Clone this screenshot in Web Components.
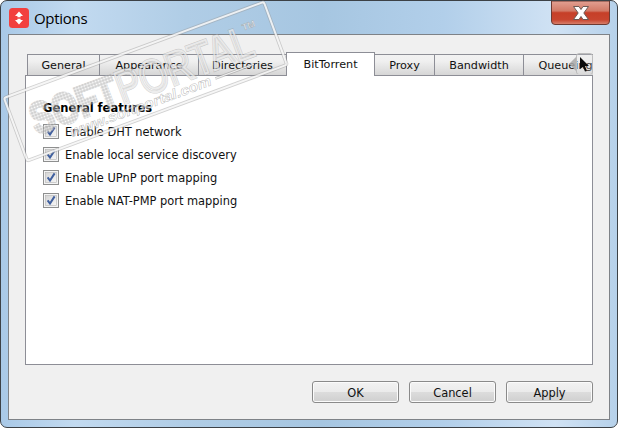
<!DOCTYPE html>
<html>
<head>
<meta charset="utf-8">
<title>Options</title>
<style>
  html, body { margin: 0; background: #fff; }
  body { font-family: "DejaVu Sans", sans-serif; font-size: 11.4px; color: #000; }
</style>
</head>
<body>
<app-window heading="Options">
  <tab-bar>
    <tab-item w="72">General</tab-item>
    <tab-item w="99">Appearance</tab-item>
    <tab-item w="88">Directories</tab-item>
    <tab-item w="88" selected>BitTorrent</tab-item>
    <tab-item w="60">Proxy</tab-item>
    <tab-item w="89">Bandwidth</tab-item>
    <tab-item w="84">Queueing</tab-item>
  </tab-bar>
  <tab-pane heading="General features">
    <check-row>Enable DHT network</check-row>
    <check-row>Enable local service discovery</check-row>
    <check-row>Enable UPnP port mapping</check-row>
    <check-row>Enable NAT-PMP port mapping</check-row>
  </tab-pane>
  <button-row>
    <dlg-button>OK</dlg-button>
    <dlg-button>Cancel</dlg-button>
    <dlg-button>Apply</dlg-button>
  </button-row>
</app-window>
<stamp-mark></stamp-mark>

<script>
class AppWindow extends HTMLElement {
  constructor() {
    super();
    const root = this.attachShadow({ mode: "open" });
    root.innerHTML = `
      <style>
        :host {
          display: flex;
          flex-direction: column;
          box-sizing: border-box;
          width: 618px;
          height: 428px;
          border: 1px solid #3c4146;
          border-radius: 7px;
          background: linear-gradient(90deg, #a9c9e7 0%, #c2daf0 12%, #b0cde6 30%, #a6c6e1 52%, #b2cfea 72%, #d0e2f4 90%, #b6d1ea 100%);
          overflow: hidden;
        }
        .title {
          display: flex;
          align-items: flex-start;
          height: 33px;
          padding: 0 7px 0 8px;
          flex: none;
        }
        .icon { margin-top: 7px; width: 20px; height: 20px; flex: none; }
        .text {
          margin: 5px 0 0 5px;
          font: 15px/24px "Open Sans", "Noto Sans", sans-serif;
          letter-spacing: -0.3px;
        }
        .close { margin-left: auto; width: 59px; height: 24px; flex: none; display: block; }
        .client {
          flex: 1;
          display: flex;
          flex-direction: column;
          margin: 0 7px 7px 7px;
          padding: 17px 17px 16px 16px;
          background: #f0f0f0;
          border: 1px solid #7e8287;
          min-height: 0;
        }
      </style>
      <div class="title">
        <svg class="icon" viewBox="0 0 20 20">
          <rect width="20" height="20" rx="3.5" fill="#f2403f"/>
          <path d="M10 3.5 14 8H11.6V9.2H8.4V8H6Z M8.4 10.8H11.6V12H14L10 16.5 6 12H8.4Z" fill="#fff"/>
        </svg>
        <div class="text"></div>
        <svg class="close" viewBox="0 0 59 24">
          <defs>
            <linearGradient id="red" x1="0" y1="0" x2="0" y2="1">
              <stop offset="0" stop-color="#e2a193"/>
              <stop offset=".42" stop-color="#d27a67"/>
              <stop offset=".5" stop-color="#c63f28"/>
              <stop offset=".8" stop-color="#c8452f"/>
              <stop offset="1" stop-color="#d98571"/>
            </linearGradient>
          </defs>
          <path d="M.5 0V20Q.5 23.5 4 23.5H55Q58.5 23.5 58.5 20V0Z" fill="url(#red)" stroke="#6d3a32"/>
          <path d="M22.5 5.5H28L30 8.5 32 5.5H37.5L32.8 12 37.5 18.5H32L30 15.5 28 18.5H22.5L27.2 12Z" fill="#fff" stroke="#6b5a55" stroke-width="1"/>
        </svg>
      </div>
      <div class="client"><slot></slot></div>
    `;
    root.querySelector(".text").textContent = this.getAttribute("heading");
  }
}

class TabBar extends HTMLElement {
  constructor() {
    super();
    const root = this.attachShadow({ mode: "open" });
    root.innerHTML = `
      <style>
        :host {
          display: block;
          position: relative;
          flex: none;
          height: 23px;
          margin-left: 2px;
          width: 566px;
          z-index: 1;
        }
        .tabs { display: flex; height: 24px; overflow: hidden; }
        .scroller {
          position: absolute;
          left: 534px;
          top: 1px;
          width: 32px;
          height: 21px;
        }
      </style>
      <div class="tabs"><slot></slot></div>
      <svg class="scroller" viewBox="0 0 32 21">
        <path d="M8 11 15 4V18Z" fill="#a9a9a9" opacity=".85"/>
        <rect x="15.5" y=".5" width="16" height="21" rx="2.5" fill="#e6e6e6" fill-opacity=".2" stroke="#bcbcbc"/>
        <path d="M19 4 28 13H24L26 18 24 18.6 22 14 19 16Z" fill="#0c0c0c"/>
      </svg>
    `;
  }
}

class TabItem extends HTMLElement {
  constructor() {
    super();
    const root = this.attachShadow({ mode: "open" });
    root.innerHTML = `
      <style>
        :host {
          display: flex;
          align-items: center;
          justify-content: center;
          box-sizing: border-box;
          flex: none;
          height: 21px;
          margin-top: 2px;
          margin-right: -1px;
          padding-top: 1px;
          border: 1px solid #8d8e96;
          border-bottom: 0;
          background: linear-gradient(#f2f2f2, #f0f0f0 30%, #d6d6d6);
          white-space: nowrap;
          font-size: 11.2px;
          color: #111;
        }
        :host([selected]) {
          height: 24px;
          margin-top: 0;
          background: #fff;
          position: relative;
          z-index: 1;
          padding-top: 0;
          padding-bottom: 0;
        }
      </style>
      <slot></slot>
    `;
    this.style.width = (Number(this.getAttribute("w")) + 1) + "px";
  }
}

class TabPane extends HTMLElement {
  constructor() {
    super();
    const root = this.attachShadow({ mode: "open" });
    root.innerHTML = `
      <style>
        :host {
          display: block;
          box-sizing: border-box;
          flex: 1;
          min-height: 0;
          background: #fff;
          border: 1px solid #8d8e96;
          padding: 24px 17px 0 17px;
          width: 568px;
        }
        h4 { margin: 0 0 8px; font-size: 11.5px; line-height: 16px; font-weight: bold; }
        .rows { display: flex; flex-direction: column; gap: 8px; }
      </style>
      <h4></h4>
      <div class="rows"><slot></slot></div>
    `;
    root.querySelector("h4").textContent = this.getAttribute("heading");
  }
}

class CheckRow extends HTMLElement {
  constructor() {
    super();
    const root = this.attachShadow({ mode: "open" });
    root.innerHTML = `
      <style>
        :host { display: flex; align-items: center; gap: 6px; height: 15px; color: #111; white-space: nowrap; }
        svg { width: 16px; height: 15px; flex: none; }
      </style>
      <svg viewBox="0 0 16 15">
        <defs>
          <linearGradient id="box" x1="0" y1="0" x2="1" y2="1">
            <stop offset="0" stop-color="#d4d4d4"/>
            <stop offset="1" stop-color="#f6f6f6"/>
          </linearGradient>
        </defs>
        <rect x=".5" y=".5" width="15" height="14" fill="#f4f4f4" stroke="#8e8f8f"/>
        <rect x="2.5" y="2.5" width="11" height="10" fill="url(#box)" stroke="#b4b4b4" stroke-width=".6"/>
        <path d="M4.6 7.4 7 10.6 11.6 3.4" fill="none" stroke="#40609f" stroke-width="2"/>
      </svg>
      <slot></slot>
    `;
  }
}

class ButtonRow extends HTMLElement {
  constructor() {
    super();
    const root = this.attachShadow({ mode: "open" });
    root.innerHTML = `
      <style>
        :host { display: flex; justify-content: flex-end; gap: 10px; flex: none; margin-top: 16px; width: 568px; }
      </style>
      <slot></slot>
    `;
  }
}

class DlgButton extends HTMLElement {
  constructor() {
    super();
    const root = this.attachShadow({ mode: "open" });
    root.innerHTML = `
      <style>
        :host {
          display: flex;
          align-items: center;
          justify-content: center;
          box-sizing: border-box;
          width: 87px;
          height: 22px;
          padding-top: 2px;
          border: 1px solid #8a8a8a;
          border-radius: 3px;
          background: linear-gradient(#f2f2f2, #ebebeb 48%, #dcdcdc 52%, #cfcfcf);
          box-shadow: inset 0 0 0 1px #fbfbfb;
          color: #111;
        }
      </style>
      <slot></slot>
    `;
  }
}

// watermark lies over the whole window
class StampMark extends HTMLElement {
  constructor() {
    super();
    const root = this.attachShadow({ mode: "open" });
    root.innerHTML = `
      <style>
        :host { position: absolute; left: 0; top: 0; width: 618px; height: 428px; pointer-events: none; z-index: 5; }
        svg { display: block; }
        text { font-family: "Liberation Sans", sans-serif; }
        .big { font-size: 46px; fill: none; }
      </style>
      <svg width="618" height="428" viewBox="0 0 618 428">
        <defs>
          <pattern id="dots" width="3" height="3" patternUnits="userSpaceOnUse">
            <rect width="3" height="3" fill="#9c9c9c"/>
            <circle cx="1.5" cy="1.5" r="1.1" fill="#fff"/>
          </pattern>
        </defs>
        <g transform="translate(4 98) rotate(-20.3)">
          <rect x="0" y="0" width="277" height="67" rx="2" fill="none" stroke="#9a9a9a" stroke-opacity=".45" stroke-width="3.6"/>
          <rect x="0" y="0" width="277" height="67" rx="2" fill="none" stroke="#fff" stroke-opacity=".8" stroke-width="2"/>
          <text x="18" y="46" font-size="44" font-weight="bold" fill="url(#dots)" stroke="url(#dots)" stroke-width="3" opacity=".5" textLength="90" lengthAdjust="spacingAndGlyphs">SOFT</text>
          <text class="big" x="109" y="47" stroke="#8f8f8f" stroke-opacity=".4" stroke-width="3.2" textLength="143" lengthAdjust="spacingAndGlyphs">PORTAL</text>
          <text class="big" x="109" y="47" stroke="#fff" stroke-opacity=".6" stroke-width="2" textLength="143" lengthAdjust="spacingAndGlyphs">PORTAL</text>
          <text x="248" y="20" font-size="9" font-weight="bold" fill="#fff" fill-opacity=".7" stroke="#999" stroke-opacity=".7" stroke-width=".5">TM</text>
          <text x="50" y="60" font-size="14" font-style="italic" font-weight="bold" fill="#fff" fill-opacity=".6" stroke="#909090" stroke-opacity=".6" stroke-width=".5" textLength="150" lengthAdjust="spacingAndGlyphs">www.softportal.com</text>
          <path d="M205 55H246" stroke="#999" stroke-opacity=".6" stroke-width="2.6"/>
          <path d="M205 55H246" stroke="#fff" stroke-opacity=".8" stroke-width="1.2"/>
        </g>
      </svg>
    `;
  }
}

customElements.define("app-window", AppWindow);
customElements.define("tab-bar", TabBar);
customElements.define("tab-item", TabItem);
customElements.define("tab-pane", TabPane);
customElements.define("check-row", CheckRow);
customElements.define("button-row", ButtonRow);
customElements.define("dlg-button", DlgButton);
customElements.define("stamp-mark", StampMark);
</script>
</body>
</html>
